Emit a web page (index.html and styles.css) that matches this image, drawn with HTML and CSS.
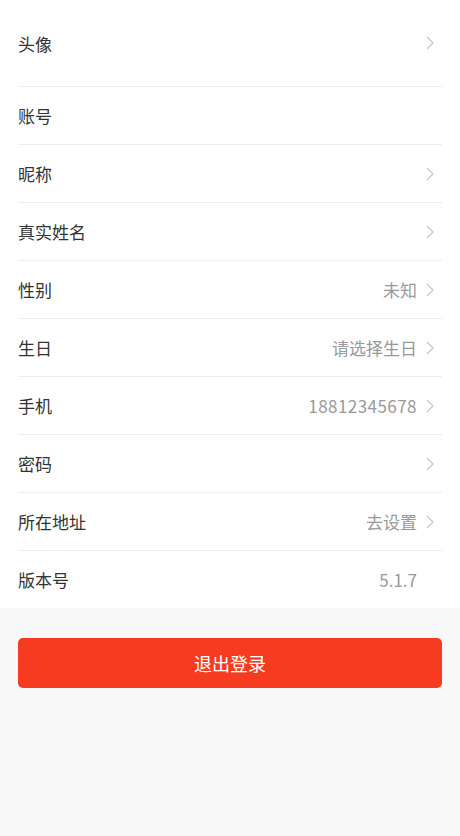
FILE: index.html
```html
<!DOCTYPE html>
<html lang="zh-CN">
<head>
<meta charset="utf-8">
<title>个人信息</title>
<link rel="stylesheet" href="styles.css">
</head>
<body>
<div class="page">
  <ul class="list">
    <li class="row row-avatar">
      <span class="label">头像</span>
      <span class="right"><svg class="chev" viewBox="0 0 8 14" width="8" height="14"><path d="M1 1 L7 7 L1 13" fill="none" stroke="#c4c4c4" stroke-width="1.2"/></svg></span>
    </li>
    <li class="row">
      <span class="label">账号</span>
    </li>
    <li class="row">
      <span class="label">昵称</span>
      <span class="right"><svg class="chev" viewBox="0 0 8 14" width="8" height="14"><path d="M1 1 L7 7 L1 13" fill="none" stroke="#c4c4c4" stroke-width="1.2"/></svg></span>
    </li>
    <li class="row">
      <span class="label">真实姓名</span>
      <span class="right"><svg class="chev" viewBox="0 0 8 14" width="8" height="14"><path d="M1 1 L7 7 L1 13" fill="none" stroke="#c4c4c4" stroke-width="1.2"/></svg></span>
    </li>
    <li class="row">
      <span class="label">性别</span>
      <span class="right"><span class="value">未知</span><svg class="chev" viewBox="0 0 8 14" width="8" height="14"><path d="M1 1 L7 7 L1 13" fill="none" stroke="#c4c4c4" stroke-width="1.2"/></svg></span>
    </li>
    <li class="row">
      <span class="label">生日</span>
      <span class="right"><span class="value">请选择生日</span><svg class="chev" viewBox="0 0 8 14" width="8" height="14"><path d="M1 1 L7 7 L1 13" fill="none" stroke="#c4c4c4" stroke-width="1.2"/></svg></span>
    </li>
    <li class="row">
      <span class="label">手机</span>
      <span class="right"><span class="value num">18812345678</span><svg class="chev" viewBox="0 0 8 14" width="8" height="14"><path d="M1 1 L7 7 L1 13" fill="none" stroke="#c4c4c4" stroke-width="1.2"/></svg></span>
    </li>
    <li class="row">
      <span class="label">密码</span>
      <span class="right"><svg class="chev" viewBox="0 0 8 14" width="8" height="14"><path d="M1 1 L7 7 L1 13" fill="none" stroke="#c4c4c4" stroke-width="1.2"/></svg></span>
    </li>
    <li class="row">
      <span class="label">所在地址</span>
      <span class="right"><span class="value">去设置</span><svg class="chev" viewBox="0 0 8 14" width="8" height="14"><path d="M1 1 L7 7 L1 13" fill="none" stroke="#c4c4c4" stroke-width="1.2"/></svg></span>
    </li>
    <li class="row row-last">
      <span class="label">版本号</span>
      <span class="right"><span class="value">5.1.7</span><span class="chev-space"></span></span>
    </li>
  </ul>
  <div class="actions">
    <button class="logout">退出登录</button>
  </div>
</div>
</body>
</html>
```

FILE: styles.css
```css
* { box-sizing: border-box; }
html, body {
  margin: 0;
  padding: 0;
  background: #f8f8f8;
  font-family: "Noto Sans CJK SC", "Noto Sans", sans-serif;
}
.page {
  min-height: 836px;
  background: #f8f8f8;
}
.list {
  list-style: none;
  margin: 0;
  padding: 0 18px;
  background: #ffffff;
}
.row {
  display: flex;
  align-items: center;
  justify-content: space-between;
  height: 58px;
  border-bottom: 1px solid #eeeeee;
  font-size: 17px;
}
.row-avatar {
  height: 87px;
}
.row-last {
  height: 57px;
  border-bottom: none;
}
.label {
  color: #333333;
}
.right {
  display: flex;
  align-items: center;
}
.value {
  color: #999999;
}
.num {
  letter-spacing: 0.45px;
}
.chev {
  display: block;
  margin-left: 9px;
  margin-right: 8px;
}
.chev-space {
  display: block;
  width: 25px;
  height: 14px;
}
.actions {
  padding: 30px 18px 0;
}
.logout {
  display: block;
  width: 100%;
  height: 50px;
  border: none;
  border-radius: 5px;
  background: #f73b20;
  color: #ffffff;
  font-family: "Noto Sans CJK SC", "Noto Sans", sans-serif;
  font-size: 18px;
  padding: 0;
}
```
